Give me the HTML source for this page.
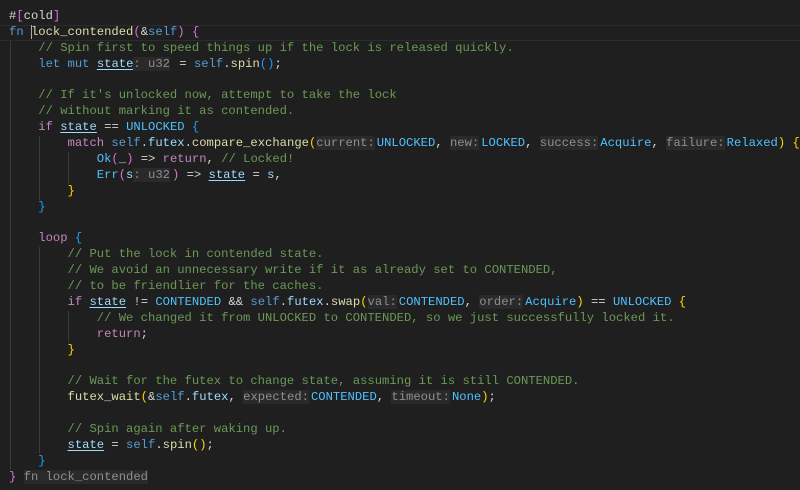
<!DOCTYPE html>
<html><head><meta charset="utf-8"><style>
html,body{margin:0;padding:0;background:#1f1f1f;width:800px;height:490px;overflow:hidden}
#ed{position:relative;font-family:"Liberation Mono",monospace;font-size:12.2px;color:#d4d4d4;padding-top:9px}
.l{height:15.9px;line-height:15.9px;white-space:pre;padding-left:9px;position:relative}
.cur{background:#1f1f1f;box-shadow:inset 0 1px 0 #2c2c2c,inset 0 -1px 0 #2c2c2c}
.g{position:absolute;top:0;width:1px;height:15.9px;background:#3a3a3a}
.k{color:#569cd6}.c{color:#6a9955}.f{color:#dcdcaa}.v{color:#9cdcfe}.n{color:#4fc1ff}
.p{color:#c586c0}.y{color:#ffd700}.m{color:#da70d6}.b{color:#179fff}
.u{text-decoration:underline;text-decoration-color:#9cdcfe;text-underline-offset:2px}
.h{background:#2a2a2a;color:#8f8f8f;margin-right:2px}
.caret{display:inline-block;width:1px;height:14px;background:#aeafad;vertical-align:middle;margin-right:-1px}
</style></head><body><div id="ed">
<div class="l">#<span class="m">[</span>cold<span class="m">]</span></div>
<div class="l cur"><span class="k">fn</span> <span class="caret"></span><span class="f">lock_contended</span><span class="m">(</span>&amp;<span class="k">self</span><span class="m">)</span> <span class="m">{</span></div>
<div class="l"><i class="g" style="left:10px"></i>    <span class="c">// Spin first to speed things up if the lock is released quickly.</span></div>
<div class="l"><i class="g" style="left:10px"></i>    <span class="k">let</span> <span class="k">mut</span> <span class="v u">state</span><span class="h">: u32</span> = <span class="k">self</span>.<span class="f">spin</span><span class="b">()</span>;</div>
<div class="l"><i class="g" style="left:10px"></i></div>
<div class="l"><i class="g" style="left:10px"></i>    <span class="c">// If it's unlocked now, attempt to take the lock</span></div>
<div class="l"><i class="g" style="left:10px"></i>    <span class="c">// without marking it as contended.</span></div>
<div class="l"><i class="g" style="left:10px"></i>    <span class="p">if</span> <span class="v u">state</span> == <span class="n">UNLOCKED</span> <span class="b">{</span></div>
<div class="l"><i class="g" style="left:10px"></i><i class="g" style="left:39px"></i>        <span class="p">match</span> <span class="k">self</span>.<span class="v">futex</span>.<span class="f">compare_exchange</span><span class="y">(</span><span class="h">current:</span><span class="n">UNLOCKED</span>, <span class="h">new:</span><span class="n">LOCKED</span>, <span class="h">success:</span><span class="n">Acquire</span>, <span class="h">failure:</span><span class="n">Relaxed</span><span class="y">)</span> <span class="y">{</span></div>
<div class="l"><i class="g" style="left:10px"></i><i class="g" style="left:39px"></i><i class="g" style="left:68px"></i>            <span class="n">Ok</span><span class="m">(</span>_<span class="m">)</span> =&gt; <span class="p">return</span>, <span class="c">// Locked!</span></div>
<div class="l"><i class="g" style="left:10px"></i><i class="g" style="left:39px"></i><i class="g" style="left:68px"></i>            <span class="n">Err</span><span class="m">(</span><span class="v">s</span><span class="h">: u32</span><span class="m">)</span> =&gt; <span class="v u">state</span> = <span class="v">s</span>,</div>
<div class="l"><i class="g" style="left:10px"></i><i class="g" style="left:39px"></i>        <span class="y">}</span></div>
<div class="l"><i class="g" style="left:10px"></i>    <span class="b">}</span></div>
<div class="l"><i class="g" style="left:10px"></i></div>
<div class="l"><i class="g" style="left:10px"></i>    <span class="p">loop</span> <span class="b">{</span></div>
<div class="l"><i class="g" style="left:10px"></i><i class="g" style="left:39px"></i>        <span class="c">// Put the lock in contended state.</span></div>
<div class="l"><i class="g" style="left:10px"></i><i class="g" style="left:39px"></i>        <span class="c">// We avoid an unnecessary write if it as already set to CONTENDED,</span></div>
<div class="l"><i class="g" style="left:10px"></i><i class="g" style="left:39px"></i>        <span class="c">// to be friendlier for the caches.</span></div>
<div class="l"><i class="g" style="left:10px"></i><i class="g" style="left:39px"></i>        <span class="p">if</span> <span class="v u">state</span> != <span class="n">CONTENDED</span> &amp;&amp; <span class="k">self</span>.<span class="v">futex</span>.<span class="f">swap</span><span class="y">(</span><span class="h">val:</span><span class="n">CONTENDED</span>, <span class="h">order:</span><span class="n">Acquire</span><span class="y">)</span> == <span class="n">UNLOCKED</span> <span class="y">{</span></div>
<div class="l"><i class="g" style="left:10px"></i><i class="g" style="left:39px"></i><i class="g" style="left:68px"></i>            <span class="c">// We changed it from UNLOCKED to CONTENDED, so we just successfully locked it.</span></div>
<div class="l"><i class="g" style="left:10px"></i><i class="g" style="left:39px"></i><i class="g" style="left:68px"></i>            <span class="p">return</span>;</div>
<div class="l"><i class="g" style="left:10px"></i><i class="g" style="left:39px"></i>        <span class="y">}</span></div>
<div class="l"><i class="g" style="left:10px"></i><i class="g" style="left:39px"></i></div>
<div class="l"><i class="g" style="left:10px"></i><i class="g" style="left:39px"></i>        <span class="c">// Wait for the futex to change state, assuming it is still CONTENDED.</span></div>
<div class="l"><i class="g" style="left:10px"></i><i class="g" style="left:39px"></i>        <span class="f">futex_wait</span><span class="y">(</span>&amp;<span class="k">self</span>.<span class="v">futex</span>, <span class="h">expected:</span><span class="n">CONTENDED</span>, <span class="h">timeout:</span><span class="n">None</span><span class="y">)</span>;</div>
<div class="l"><i class="g" style="left:10px"></i><i class="g" style="left:39px"></i></div>
<div class="l"><i class="g" style="left:10px"></i><i class="g" style="left:39px"></i>        <span class="c">// Spin again after waking up.</span></div>
<div class="l"><i class="g" style="left:10px"></i><i class="g" style="left:39px"></i>        <span class="v u">state</span> = <span class="k">self</span>.<span class="f">spin</span><span class="y">()</span>;</div>
<div class="l"><i class="g" style="left:10px"></i>    <span class="b">}</span></div>
<div class="l"><span class="m">}</span> <span class="h">fn lock_contended</span></div>
</div></body></html>
